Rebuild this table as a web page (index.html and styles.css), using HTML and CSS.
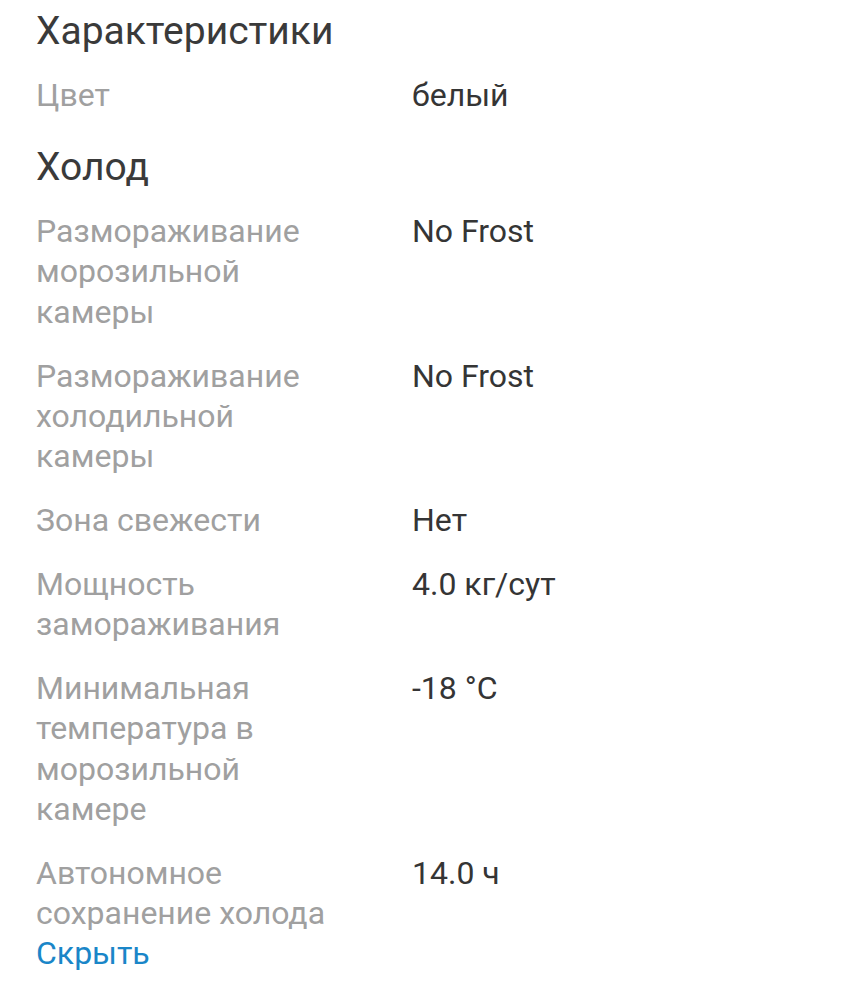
FILE: index.html
```html
<!DOCTYPE html>
<html lang="ru">
<head>
<meta charset="utf-8">
<link rel="stylesheet" href="styles.css">
</head>
<body>
<div class="specs">
  <h2 class="title">Характеристики</h2>
  <div class="row first"><div class="label">Цвет</div><div class="value">белый</div></div>
  <h2 class="group">Холод</h2>
  <div class="row"><div class="label">Размораживание морозильной камеры</div><div class="value">No Frost</div></div>
  <div class="row"><div class="label">Размораживание холодильной камеры</div><div class="value">No Frost</div></div>
  <div class="row"><div class="label">Зона свежести</div><div class="value">Нет</div></div>
  <div class="row"><div class="label">Мощность замораживания</div><div class="value">4.0 кг/сут</div></div>
  <div class="row"><div class="label">Минимальная температура в морозильной камере</div><div class="value">-18 °C</div></div>
  <div class="row last"><div class="label">Автономное сохранение холода</div><div class="value">14.0 ч</div></div>
  <a class="toggle">Скрыть</a>
</div>
</body>
</html>
```

FILE: styles.css
```css
html, body {
  margin: 0;
  padding: 0;
  background: #ffffff;
}
body {
  font-family: Roboto, "Noto Sans", sans-serif;
  color: #333333;
}
.specs {
  padding: 7px 36px 0 36px;
  display: flex;
  flex-direction: column;
  align-items: stretch;
}
.title, .group {
  margin: 0;
  font-weight: 400;
  font-size: 39px;
  line-height: 48px;
  color: #3a3a3a;
}
.group {
  margin-top: 27.5px;
  margin-bottom: 20.5px;
}
.row {
  display: grid;
  grid-template-columns: 300px 1fr;
  column-gap: 76px;
  font-size: 32px;
  line-height: 40.2px;
  margin-bottom: 23.8px;
}
.row.first {
  margin-top: 20px;
  margin-bottom: 0;
}
.row.last {
  margin-bottom: 0;
}
.label {
  color: #a0a0a0;
}
.value {
  color: #353535;
}
.toggle {
  align-self: flex-start;
  font-size: 32px;
  line-height: 40.2px;
  color: #1a86c8;
  text-decoration: none;
}
```
